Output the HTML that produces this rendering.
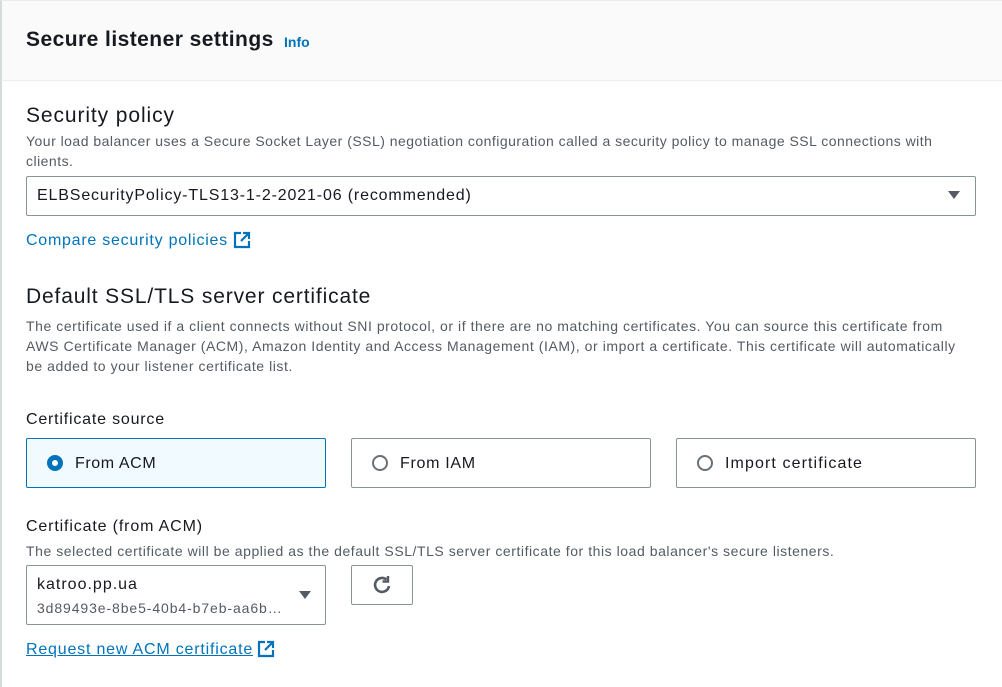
<!DOCTYPE html>
<html><head><style>
*{margin:0;padding:0;box-sizing:border-box}
body{width:1002px;height:687px;overflow:hidden;background:#fff;font-family:"Liberation Sans",sans-serif;color:#16191f;position:relative}
.a{position:absolute;white-space:nowrap}
.hdr{position:absolute;left:0;top:0;width:1002px;height:81px;background:#fafafa;border-left:2px solid #d5dbdb;border-top:1px solid #eaeded;border-bottom:1px solid #eaeded}
.lb{position:absolute;left:0;top:81px;width:2px;height:606px;background:#d5dbdb}
.desc{font-size:14px;color:#545b64;line-height:20px;letter-spacing:0.5px}
.t16{font-size:16px;letter-spacing:0.85px}
.h2{font-size:21px;letter-spacing:0.9px}
.link{color:#0073bb}
.box{position:absolute;border:1px solid #879596;border-radius:2px;background:#fff}
.radio{position:absolute;width:16px;height:16px;border-radius:50%;border:2px solid #687078;background:#fff}
</style></head><body>
<div class="hdr"></div><div class="lb"></div>
<div class="a" style="left:26px;top:28px;font-size:21px;font-weight:bold;letter-spacing:0.45px">Secure listener settings</div>
<div class="a" style="left:284px;top:34px;font-size:14px;font-weight:bold;color:#0073bb">Info</div>

<div class="a h2" style="left:26px;top:104px">Security policy</div>
<div class="a desc" style="left:26px;top:131px;letter-spacing:0.48px">Your load balancer uses a Secure Socket Layer (SSL) negotiation configuration called a security policy to manage SSL connections with<br>clients.</div>
<div class="box" style="left:26px;top:176px;width:950px;height:40px"></div>
<div class="a t16" style="left:37px;top:187px">ELBSecurityPolicy-TLS13-1-2-2021-06 (recommended)</div>
<svg class="a" style="left:947px;top:190px" width="14" height="10"><path d="M1 1h12L7 9z" fill="#545b64"/></svg>
<div class="a link t16" style="left:26px;top:232px;letter-spacing:0.75px">Compare security policies</div>
<svg class="a" style="left:233px;top:231px" width="18" height="18" viewBox="0 0 18 18" fill="none" stroke="#0073bb" stroke-width="2.2"><path d="M8 2H2v14h14v-6M10 2h6v6M16 2L8 10"/></svg>

<div class="a h2" style="left:26px;top:285px;letter-spacing:0.85px">Default SSL/TLS server certificate</div>
<div class="a desc" style="left:26px;top:316px;letter-spacing:0.56px">The certificate used if a client connects without SNI protocol, or if there are no matching certificates. You can source this certificate from<br>AWS Certificate Manager (ACM), Amazon Identity and Access Management (IAM), or import a certificate. This certificate will automatically<br>be added to your listener certificate list.</div>

<div class="a t16" style="left:26px;top:411px;letter-spacing:0.8px">Certificate source</div>
<div class="box" style="left:26px;top:438px;width:300px;height:50px;background:#f1faff;border-color:#0073bb"></div>
<div class="radio" style="left:47px;top:455px;border:5px solid #0073bb"></div>
<div class="a t16" style="left:75px;top:455px;letter-spacing:0.6px">From ACM</div>
<div class="box" style="left:351px;top:438px;width:300px;height:50px"></div>
<div class="radio" style="left:372px;top:455px"></div>
<div class="a t16" style="left:400px;top:455px;letter-spacing:0.7px">From IAM</div>
<div class="box" style="left:676px;top:438px;width:300px;height:50px"></div>
<div class="radio" style="left:697px;top:455px"></div>
<div class="a t16" style="left:725px;top:455px;letter-spacing:1.1px">Import certificate</div>

<div class="a t16" style="left:26px;top:518px;letter-spacing:0.85px">Certificate (from ACM)</div>
<div class="a desc" style="left:26px;top:541px;letter-spacing:0.55px">The selected certificate will be applied as the default SSL/TLS server certificate for this load balancer's secure listeners.</div>
<div class="box" style="left:26px;top:565px;width:300px;height:60px"></div>
<div class="a t16" style="left:37px;top:576px;letter-spacing:1px">katroo.pp.ua</div>
<div class="a" style="left:37px;top:600px;font-size:14px;color:#545b64;letter-spacing:0.9px">3d89493e-8be5-40b4-b7eb-aa6b…</div>
<svg class="a" style="left:298px;top:590px" width="14" height="10"><path d="M1 1h12L7 9z" fill="#545b64"/></svg>
<div class="box" style="left:351px;top:565px;width:62px;height:40px"></div>
<svg class="a" style="left:370px;top:573px" width="24" height="24" viewBox="0 0 24 24" fill="none" stroke="#545b64" stroke-width="2.6"><path d="M19 13a7 7 0 1 1-2.5-6.5"/><path d="M18 3v5.5h-5.5" stroke-width="2.4"/></svg>
<div class="a link t16" style="left:26px;top:641px;text-decoration:underline;letter-spacing:0.8px">Request new ACM certificate</div>
<svg class="a" style="left:257px;top:640px" width="18" height="18" viewBox="0 0 18 18" fill="none" stroke="#0073bb" stroke-width="2.2"><path d="M8 2H2v14h14v-6M10 2h6v6M16 2L8 10"/></svg>
</body></html>
